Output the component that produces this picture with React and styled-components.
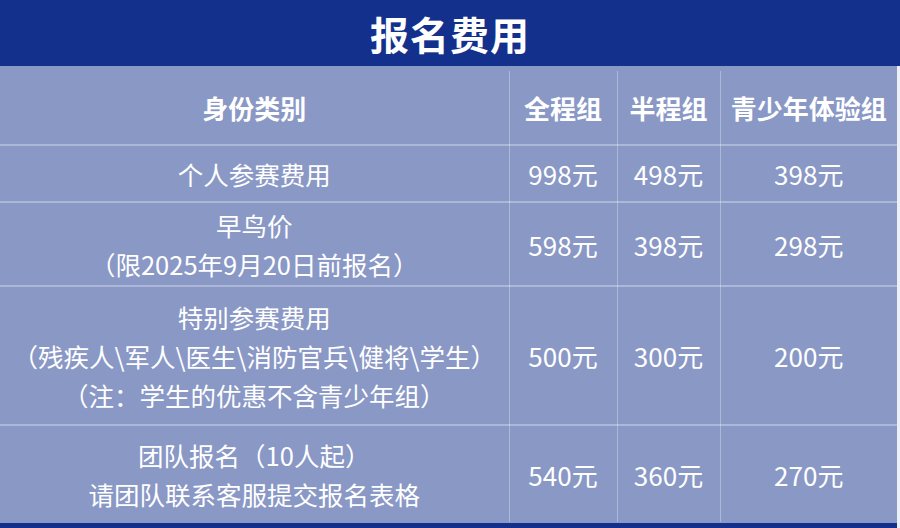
import React from 'react'
import styled, { createGlobalStyle } from 'styled-components';

const GlobalStyle = createGlobalStyle`
html, body {
  margin: 0;
  padding: 0;
  background: #eef0f7;
}
body {
  font-family: "Noto Sans CJK SC", "Noto Sans", sans-serif;
}
`;

const Page = styled.div`
width: 900px;
height: 528px;
overflow: hidden;
display: flex;
flex-direction: column;
`;

const TitleBar = styled.div`
height: 66px;
background: #14308d;
display: flex;
align-items: center;
justify-content: center;
flex-shrink: 0;
`;

const Title = styled.h1`
margin: 0;
color: #fff;
font-size: 39px;
font-weight: 700;
letter-spacing: 1px;
line-height: 1;
`;

const Body = styled.div`
width: 897px;
flex: 1;
background: #8a98c6;
padding-top: 5px;
box-sizing: border-box;
border-bottom: 5px solid #14308d;
display: flex;
flex-direction: column;
`;

const Table = styled.table`
width: 100%;
border-collapse: collapse;
table-layout: fixed;
color: #fff;
`;

const Row = styled.tr`
height: ${p => p.h}px;
border-bottom: ${p => (p.last ? 'none' : '2px solid rgba(255,255,255,0.3)')};
`;

const Head = styled.th`
font-size: 26px;
font-weight: 700;
text-align: center;
padding: 0;
border-left: ${p => (p.first ? 'none' : '1px solid rgba(255,255,255,0.3)')};
`;

const Cell = styled.td`
font-size: ${p => (p.price ? 26 : 25.5)}px;
font-weight: 400;
line-height: 39px;
text-align: center;
padding: 0;
vertical-align: middle;
white-space: nowrap;
border-left: ${p => (p.first ? 'none' : '1px solid rgba(255,255,255,0.3)')};
`;

const rows = [
  { h: 57, label: ['个人参赛费用'], prices: ['998元', '498元', '398元'] },
  { h: 84, label: ['早鸟价', '（限2025年9月20日前报名）'], prices: ['598元', '398元', '298元'] },
  {
    h: 139,
    label: ['特别参赛费用', '（残疾人\\军人\\医生\\消防官兵\\健将\\学生）', '（注：学生的优惠不含青少年组）'],
    prices: ['500元', '300元', '200元'],
  },
  { h: 97, label: ['团队报名（10人起）', '请团队联系客服提交报名表格'], prices: ['540元', '360元', '270元'] },
];

export default function App() {
  return (
    <Page>
      <GlobalStyle />
      <TitleBar>
        <Title>报名费用</Title>
      </TitleBar>
      <Body>
        <Table>
          <colgroup>
            <col style={{ width: 509 }} />
            <col style={{ width: 108 }} />
            <col style={{ width: 103 }} />
            <col style={{ width: 177 }} />
          </colgroup>
          <thead>
            <Row h={74}>
              <Head first>身份类别</Head>
              <Head>全程组</Head>
              <Head>半程组</Head>
              <Head>青少年体验组</Head>
            </Row>
          </thead>
          <tbody>
            {rows.map((r, i) => (
              <Row key={i} h={r.h} last={i === rows.length - 1}>
                <Cell first>
                  {r.label.map((l, j) => (
                    <div key={j}>{l}</div>
                  ))}
                </Cell>
                {r.prices.map((p, j) => (
                  <Cell key={j} price>{p}</Cell>
                ))}
              </Row>
            ))}
          </tbody>
        </Table>
      </Body>
    </Page>
  )
}
